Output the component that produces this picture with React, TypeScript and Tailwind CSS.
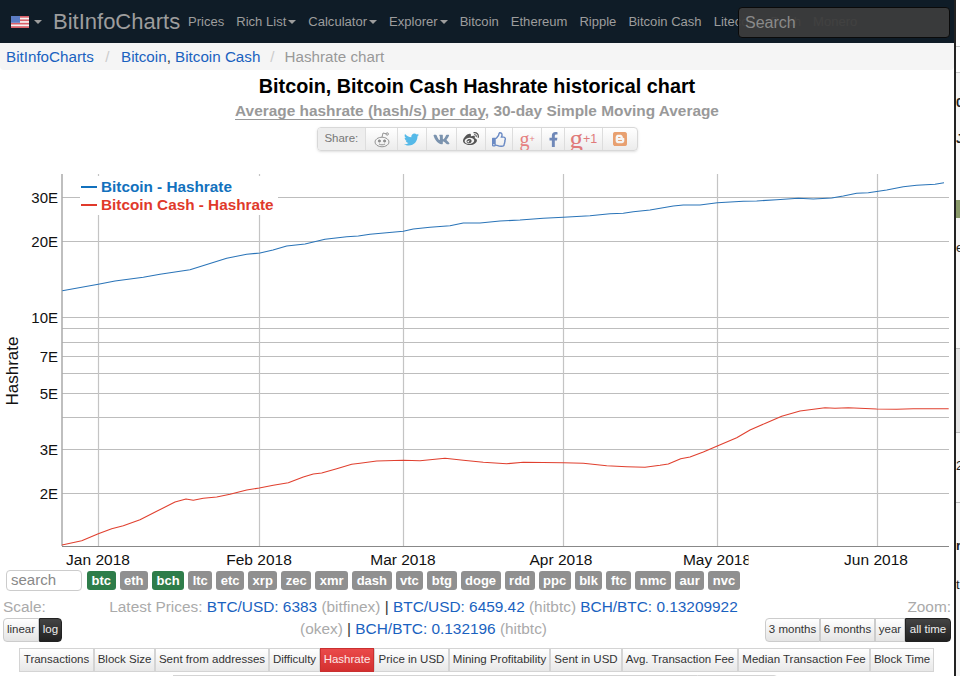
import React from 'react';
import { FaTwitter, FaVk, FaWeibo, FaRegThumbsUp, FaFacebookF, FaBlogger } from 'react-icons/fa';

const BLUE_LINE =
  '62.3,290.7 98.3,284.3 115,281 143.3,277.3 160,274.3 190,269.7 226.7,258.3 246.7,254.3 260,253 273,250 286.7,246 305,244 325,239.3 346.7,236.7 358.3,236 370,234.3 403.3,231.3 413.3,229 430,227.3 450,225.7 463.3,223 480,223 500,221 520,220 543.3,218.3 563.3,217.3 590,215.7 610,213.7 623.3,213.3 633.3,211.7 650,210 673.3,206 683.3,205 700,205 717.3,202.7 743.3,201.3 756.7,201 776.7,199.7 798.3,198.3 813.3,199 831.7,198 843.3,196 856.7,193.3 868.3,192.7 886.7,190 903.3,186.7 916.7,185.3 935,184.3 944,182.7';

const RED_LINE =
  '62,545 81.7,540.7 98.3,533.7 111.7,528.7 123.3,525.7 140,519.7 156.7,511.3 175,502 186,499 193.3,500.3 203.3,498.3 216.7,497 230,494.3 246.7,490 259.3,488 273.3,485.3 288.3,482.7 303.3,477 313.3,474 321.7,473 336.7,468.7 351.7,464.3 360,463.3 376.7,461 403.3,460.3 420,460.7 445,458.3 463.3,460.3 483.3,462.3 506.7,463.7 523.3,462.3 563.3,462.7 583.3,463.3 606.7,465.7 626.7,466.7 645,467.3 660,465.3 668.3,464 680.7,458.7 690,457 703.3,452 717.3,446 736.7,437.7 750,430 766.7,422.7 781.7,416.3 800,411 825,407.7 835,408.3 848.3,407.7 876.7,409 896.7,409.3 913.3,408.7 948.7,408.7';

const hLines = [197, 241, 317, 328, 342, 356, 373, 393, 417, 449, 493];
const vLines = [98, 259, 403, 563, 717, 877];
const yLabels = [
  { t: '30E', y: 197 },
  { t: '20E', y: 241 },
  { t: '10E', y: 317 },
  { t: '7E', y: 356 },
  { t: '5E', y: 393 },
  { t: '3E', y: 449 },
  { t: '2E', y: 493 },
];
const xLabels = [
  { t: 'Jan 2018', x: 98 },
  { t: 'Feb 2018', x: 259 },
  { t: 'Mar 2018', x: 403 },
  { t: 'Apr 2018', x: 561 },
  { t: 'May 2018', x: 717 },
  { t: 'Jun 2018', x: 876 },
];

const tags = ['btc', 'eth', 'bch', 'ltc', 'etc', 'xrp', 'zec', 'xmr', 'dash', 'vtc', 'btg', 'doge', 'rdd', 'ppc', 'blk', 'ftc', 'nmc', 'aur', 'nvc'];

const tabs = [
  { t: 'Transactions', w: 'w-[75px]' },
  { t: 'Block Size', w: 'w-[61px]' },
  { t: 'Sent from addresses', w: 'w-[114px]' },
  { t: 'Difficulty', w: 'w-[51px]' },
  { t: 'Hashrate', w: 'w-[54px]', active: true },
  { t: 'Price in USD', w: 'w-[75px]' },
  { t: 'Mining Profitability', w: 'w-[101px]' },
  { t: 'Sent in USD', w: 'w-[72px]' },
  { t: 'Avg. Transaction Fee', w: 'w-[116px]' },
  { t: 'Median Transaction Fee', w: 'w-[132px]' },
  { t: 'Block Time', w: 'w-[64px]' },
];

const btn = 'flex items-center justify-center border border-[#ccc] bg-gradient-to-b from-white to-[#e4e4e4] text-[#333]';
const btnDark = 'flex items-center justify-center border border-[#222] bg-gradient-to-b from-[#444] to-[#222] text-[#eee]';

function Caret() {
  return <span className="ml-[2px] inline-block border-x-[4px] border-t-[4px] border-x-transparent border-t-[#9d9d9d]" />;
}

function Flag() {
  return (
    <svg width="18" height="12" viewBox="0 0 18 12">
      <rect width="18" height="12" fill="#f4f4f4" />
      <rect y="0" width="18" height="1.7" fill="#d9606a" />
      <rect y="3.4" width="18" height="1.7" fill="#d9606a" />
      <rect y="6.8" width="18" height="1.7" fill="#d9606a" />
      <rect y="10.2" width="18" height="1.8" fill="#d9606a" />
      <rect width="9" height="6.8" fill="#5b7cc4" />
    </svg>
  );
}

function RedditOutline() {
  return (
    <svg width="18" height="17" viewBox="0 0 18 17" fill="none" stroke="#8a8a8a" strokeWidth="0.9">
      <ellipse cx="9" cy="11" rx="7" ry="4.8" />
      <circle cx="6.4" cy="10" r="1.1" fill="#8a8a8a" />
      <circle cx="11.6" cy="10" r="1.1" fill="#8a8a8a" />
      <path d="M6 13c1.8 1.1 4.2 1.1 6 0" />
      <path d="M9 6.2 10 2l3.2.8" />
      <circle cx="14.2" cy="3" r="1.2" />
    </svg>
  );
}

function ShareBar() {
  const cell = 'flex h-full items-center justify-center border-l border-[#ddd]';
  return (
    <div className="mx-auto mt-[6px] flex h-[24px] w-[321px] overflow-hidden rounded-[4px] border border-[#d8d8d8] bg-gradient-to-b from-white to-[#ececec] shadow-sm">
      <div className="flex w-[48px] items-center justify-center bg-[#eeeeee] text-[11.5px] text-[#777]">Share:</div>
      <div className={`${cell} w-[32px]`}><RedditOutline /></div>
      <div className={`${cell} w-[29px] text-[15px] text-[#55b9e8]`}><FaTwitter /></div>
      <div className={`${cell} w-[30px] text-[17px] text-[#7b93ae]`}><FaVk /></div>
      <div className={`${cell} w-[30px] text-[16px] text-[#555]`}><FaWeibo /></div>
      <div className={`${cell} w-[27px] text-[15px] text-[#6a8ac4]`}><FaRegThumbsUp /></div>
      <div className={`${cell} w-[29px] text-[#e58080]`}>
        <span className="font-['Liberation_Serif',serif] text-[20px] leading-[18px]">g</span>
        <span className="text-[9px] leading-none">+</span>
      </div>
      <div className={`${cell} w-[23px] text-[15px] text-[#6f88b8]`}><FaFacebookF /></div>
      <div className={`${cell} w-[38px] text-[#e07a7a]`}>
        <span className="font-['Liberation_Serif',serif] text-[27px] leading-[20px]">g</span>
        <span className="text-[12.5px] leading-none">+1</span>
      </div>
      <div className={`${cell} w-[35px] text-[16px] text-[#e8a070]`}><FaBlogger /></div>
    </div>
  );
}

function Chart() {
  return (
    <svg className="mt-[14px] block" width="954" height="405" viewBox="0 165 954 405" fontFamily="'Liberation Sans', sans-serif">
      {hLines.map((y) => (
        <line key={y} x1="62" x2="949" y1={y + 0.5} y2={y + 0.5} stroke="#bdbdbd" strokeWidth="1" />
      ))}
      {vLines.map((x) => (
        <line key={x} x1={x + 0.5} x2={x + 0.5} y1="174" y2="546" stroke="#c4c4c4" strokeWidth="1.2" />
      ))}
      <line x1="62" x2="62" y1="174" y2="546" stroke="#aaaaaa" strokeWidth="1.5" />
      <line x1="62" x2="949" y1="546.5" y2="546.5" stroke="#888888" strokeWidth="1" />
      <polyline points={BLUE_LINE} fill="none" stroke="#2a74b8" strokeWidth="1.1" strokeLinejoin="round" />
      <polyline points={RED_LINE} fill="none" stroke="#e0402f" strokeWidth="1.1" strokeLinejoin="round" />

      <rect x="80" y="176" width="198" height="39" fill="#fff" />
      <line x1="81" x2="97" y1="187" y2="187" stroke="#1271bd" strokeWidth="2" />
      <line x1="81" x2="97" y1="205" y2="205" stroke="#e0392b" strokeWidth="2" />
      <text x="101" y="192" fontSize="15.3" fontWeight="700" fill="#1271bd">Bitcoin - Hashrate</text>
      <text x="101" y="210" fontSize="15.3" fontWeight="700" fill="#e0392b">Bitcoin Cash - Hashrate</text>

      {yLabels.map((l) => (
        <text key={l.t} x="58" y={l.y + 6} fontSize="15" textAnchor="end" fill="#111">{l.t}</text>
      ))}
      {xLabels.map((l) => (
        <text key={l.t} x={l.x} y="565" fontSize="15.5" textAnchor="middle" fill="#111">{l.t}</text>
      ))}
      <rect x="748.5" y="550" width="10" height="20" fill="#fff" />
      <text transform="translate(18 371) rotate(-90)" fontSize="17" textAnchor="middle" fill="#111">Hashrate</text>
    </svg>
  );
}

function SideStrip() {
  return (
    <aside className="flex h-full w-[6px] flex-col overflow-hidden border-l-2 border-[#222] bg-[#f6f6f6] text-[13px] font-bold leading-[15px] text-[#222]">
      <div className="h-[47px] shrink-0 border-b border-[#ccc] bg-white" />
      <div className="h-[26px] shrink-0 border-b border-[#ccc] bg-white" />
      <div className="h-[22px] shrink-0" />
      <div className="h-[15px] shrink-0">0</div>
      <div className="h-[21px] shrink-0" />
      <div className="h-[15px] shrink-0">J</div>
      <div className="h-[54px] shrink-0" />
      <div className="h-[18px] shrink-0 bg-[#8a9a6a]" />
      <div className="h-[22px] shrink-0" />
      <div className="h-[15px] shrink-0 font-normal">e</div>
      <div className="h-[94px] shrink-0 border-b border-[#bbb]" />
      <div className="h-[84px] shrink-0 border-b border-[#bbb] bg-[#e4e4e4]" />
      <div className="h-[25px] shrink-0" />
      <div className="h-[15px] shrink-0 font-normal">2</div>
      <div className="h-[30px] shrink-0 border-b border-[#bbb]" />
      <div className="h-[35px] shrink-0" />
      <div className="h-[15px] shrink-0">r</div>
      <div className="h-[24px] shrink-0" />
      <div className="h-[15px] shrink-0 font-normal">t</div>
    </aside>
  );
}

export default function App() {
  return (
    <div className="flex h-[676px] w-[960px] overflow-hidden bg-white font-['Liberation_Sans',sans-serif]">
      <div className="h-full w-[954px] shrink-0 overflow-hidden">
        <nav className="relative flex h-[43px] items-center overflow-hidden bg-[#0f1c27] text-[13.05px] text-[#9d9d9d]">
          <div className="ml-[11px] flex w-[42px] shrink-0 items-center">
            <Flag />
            <span className="ml-[5px] inline-block border-x-[4px] border-t-[4px] border-x-transparent border-t-[#9d9d9d]" />
          </div>
          <span className="w-[135px] shrink-0 text-[22px] leading-none">BitInfoCharts</span>
          <div className="flex shrink-0 items-center gap-[12px] whitespace-nowrap">
            <span>Prices</span>
            <span className="flex items-center">Rich List<Caret /></span>
            <span className="flex items-center">Calculator<Caret /></span>
            <span className="flex items-center">Explorer<Caret /></span>
            <span>Bitcoin</span>
            <span>Ethereum</span>
            <span>Ripple</span>
            <span>Bitcoin Cash</span>
            <span>Litecoin</span>
            <span>Dash</span>
            <span>Monero</span>
          </div>
          <div className="absolute left-[738px] top-[7px] flex h-[31px] w-[212px] items-center rounded-[4px] border border-[#0a0a0a] bg-[#3c3c3c]/95 pl-[6px] text-[16px] text-[#8a8a8a]">
            Search
          </div>
        </nav>

        <div className="flex h-[27px] items-center rounded-b-[4px] bg-[#f5f5f5] pl-[6px] pt-px text-[15.2px] text-[#999]">
          <span className="text-[#1a62c0]">BitInfoCharts</span>
          <span className="mx-[11.5px] text-[#ccc]">/</span>
          <span className="text-[#333]"><span className="text-[#1a62c0]">Bitcoin</span>, <span className="text-[#1a62c0]">Bitcoin Cash</span></span>
          <span className="mx-[10px] text-[#ccc]">/</span>
          <span>Hashrate chart</span>
        </div>

        <h1 className="mt-[4px] text-center text-[19.8px] font-bold leading-[24px] text-black">Bitcoin, Bitcoin Cash Hashrate historical chart</h1>
        <p className="mt-[3px] text-center text-[15.4px] font-bold leading-[20px] text-[#999]">
          <span className="border-b border-[#999]">Average hashrate (hash/s) per day</span>, 30-day Simple Moving Average
        </p>

        <ShareBar />
        <Chart />

        <div className="flex h-[21px] items-center gap-[4px] pl-[6px]">
          <input
            placeholder="search"
            className="mr-px h-[21px] w-[76px] rounded-[4px] border border-[#ccc] bg-white px-[4px] text-[15px] outline-none placeholder:text-[#888]"
          />
          {tags.map((t) => (
            <span
              key={t}
              className={`flex h-[19px] items-center rounded-[3px] px-[4.5px] text-[13px] font-bold text-white ${
                t === 'btc' || t === 'bch' ? 'bg-[#2e7d4a]' : 'bg-[#909090]'
              }`}
            >
              {t}
            </span>
          ))}
        </div>

        <div className="mt-[5px] flex h-[52px]">
          <div className="w-[100px] shrink-0 pl-[3px]">
            <div className="text-[15.4px] leading-[22px] text-[#aaa]">Scale:</div>
            <div className="flex h-[24px] text-[11.5px]">
              <span className={`${btn} w-[36px] rounded-l-[4px]`}>linear</span>
              <span className={`${btnDark} w-[23px] rounded-r-[4px]`}>log</span>
            </div>
          </div>
          <p className="w-[647px] shrink-0 text-center text-[15.4px] leading-[22px] text-[#aaa]">
            Latest Prices: <span className="text-[#1a62c0]">BTC/USD: 6383</span> (bitfinex) <span className="text-[#333]">|</span>{' '}
            <span className="text-[#1a62c0]">BTC/USD: 6459.42</span> (hitbtc) <span className="text-[#1a62c0]">BCH/BTC: 0.13209922</span>{' '}
            (okex) <span className="text-[#333]">|</span> <span className="text-[#1a62c0]">BCH/BTC: 0.132196</span> (hitbtc)
          </p>
          <div className="flex flex-1 flex-col items-end pr-[3px]">
            <div className="text-[15.4px] leading-[22px] text-[#aaa]">Zoom:</div>
            <div className="flex h-[24px] text-[11.5px]">
              <span className={`${btn} w-[55px] rounded-l-[4px]`}>3 months</span>
              <span className={`${btn} w-[55px]`}>6 months</span>
              <span className={`${btn} w-[30px]`}>year</span>
              <span className={`${btnDark} w-[46px] rounded-r-[4px]`}>all time</span>
            </div>
          </div>
        </div>

        <div className="ml-[19px] flex h-[24px] text-[11.5px]">
          {tabs.map((tab) => (
            <span
              key={tab.t}
              className={`${tab.w} flex items-center justify-center whitespace-nowrap border ${
                tab.active
                  ? 'border-[#c93030] bg-gradient-to-b from-[#ea4a4a] to-[#d42f2f] text-[#fde8e8]'
                  : 'border-[#d4d4d4] bg-gradient-to-b from-white to-[#e8e8e8] text-[#333]'
              }`}
            >
              {tab.t}
            </span>
          ))}
        </div>

        <div className="ml-[173px] mt-[3px] flex h-[24px]">
          <span className="w-[116px] border border-[#d4d4d4]" />
          <span className="w-[126px] border border-[#d4d4d4]" />
          <span className="w-[141px] border border-[#d4d4d4]" />
          <span className="w-[44px] border border-[#d4d4d4]" />
          <span className="w-[97px] border border-[#d4d4d4]" />
          <span className="w-[81px] rounded-tr-[4px] border border-[#d4d4d4]" />
        </div>
      </div>
      <SideStrip />
    </div>
  );
}
